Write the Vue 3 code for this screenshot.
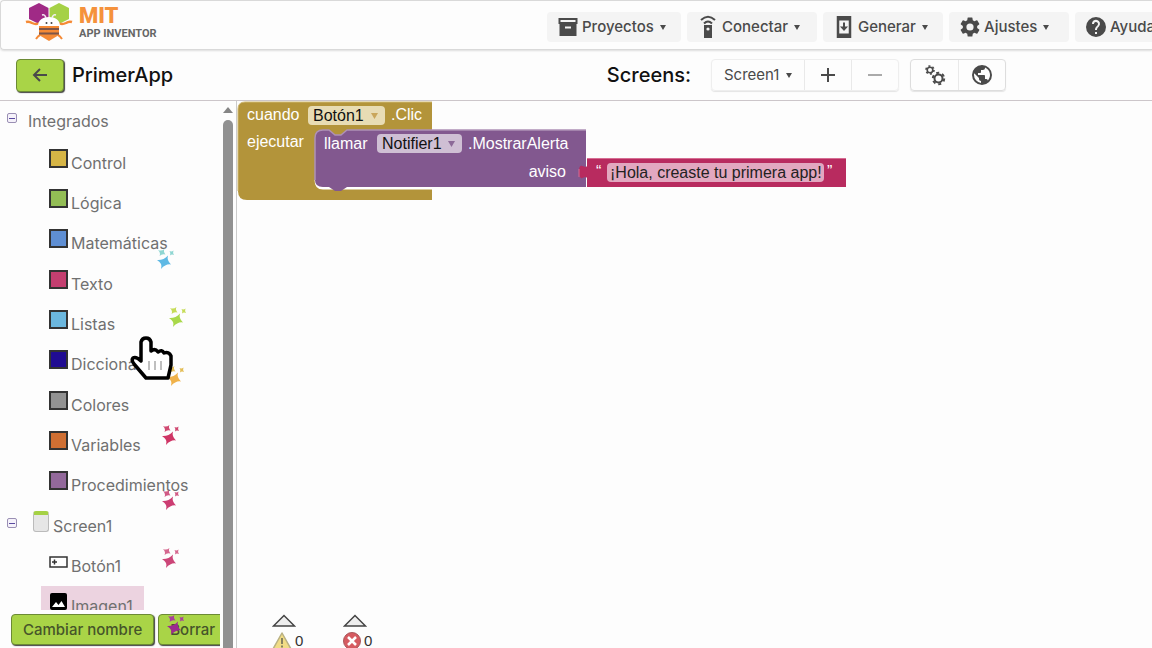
<script setup>
import { ref } from 'vue'

const menus = [
  { label: 'Proyectos', icon: 'archive' },
  { label: 'Conectar', icon: 'remote' },
  { label: 'Generar', icon: 'build' },
  { label: 'Ajustes', icon: 'gear' },
  { label: 'Ayuda', icon: 'help' }
]

const drawers = [
  { label: 'Control', tone: 'control' },
  { label: 'Lógica', tone: 'logic' },
  { label: 'Matemáticas', tone: 'math' },
  { label: 'Texto', tone: 'text' },
  { label: 'Listas', tone: 'lists' },
  { label: 'Diccionarios', tone: 'dicts' },
  { label: 'Colores', tone: 'colors' },
  { label: 'Variables', tone: 'vars' },
  { label: 'Procedimientos', tone: 'procs' }
]

const sparkles = [
  { x: 155, y: 247, color: '#5fb9e4', accent: '#8fd6d2' },
  { x: 167, y: 305, color: '#a9d94a', accent: '#c6dc58' },
  { x: 165, y: 364, color: '#f0b24a', accent: '#e3bd55' },
  { x: 160, y: 423, color: '#cf3565', accent: '#d04a72' },
  { x: 160, y: 488, color: '#cc3d72', accent: '#d15a85' },
  { x: 160, y: 546, color: '#cc4678', accent: '#d5688f' },
  { x: 165, y: 613, color: '#9c2a8f', accent: '#a8409c' }
]

const message = ref('¡Hola, creaste tu primera app!')
</script>

<template>
  <div class="app">
    <header class="topbar">
      <a class="brand" href="#" aria-label="MIT App Inventor">
        <svg width="48" height="40" viewBox="0 0 48 40" aria-hidden="true">
          <path d="M14 1 23.500 6V17L14 22 4 17V6z" fill="#a02a86" />
          <path d="M34 1 44 6V17L34 22 24.500 17V6z" fill="#a5d145" />
          <path d="M1 20q3-1 6 1 4 2 8 0M47 20q-3-1-6 1-4 2-8 0" fill="none" stroke="#f58a35" stroke-width="2.500" />
          <path d="M15 33q-2 1-4 4M33 33q2 1 4 4" fill="none" stroke="#f58a35" stroke-width="2" />
          <path d="M14 23h20v10l-10 6-10-6z" fill="#f58a35" />
          <path d="M14 27h20M14 31.500h20" stroke="#7d5548" stroke-width="2" />
          <path d="M13 24c0-6 5-9 11-9s11 3 11 9z" fill="#fff" />
          <path d="M21 16q-1-4-4-3M27 16q1-4 4-3" fill="none" stroke="#f3eef3" stroke-width="1.500" />
          <circle cx="21.500" cy="21" r="1" fill="#444" /><circle cx="26.500" cy="21" r="1" fill="#444" />
        </svg>
        <span class="brand-text"><b>MIT</b><span>APP INVENTOR</span></span>
      </a>
      <nav class="menus" aria-label="Principal">
        <button v-for="m in menus" :key="m.label" class="menu" type="button" aria-haspopup="menu">
          <svg v-if="m.icon === 'archive'" width="20" height="20" viewBox="0 0 20 20">
            <path d="M1.500 2h17v4h-17z" fill="none" stroke="currentColor" stroke-width="2" />
            <path d="M1.500 7h17v12h-17z" fill="currentColor" /><path d="M7 10.500h6" stroke="#f4f4f4" stroke-width="2" />
          </svg>
          <svg v-else-if="m.icon === 'remote'" width="20" height="24" viewBox="0 0 20 24">
            <path d="M3 5q7-6.500 14 0M6 8.500q4-4 8 0" fill="none" stroke="currentColor" stroke-width="2" />
            <path d="M6 10h8v13H6z" fill="currentColor" /><circle cx="10" cy="14" r="1.600" fill="#f4f4f4" />
          </svg>
          <svg v-else-if="m.icon === 'build'" width="20" height="22" viewBox="0 0 20 22">
            <path d="M4 1h12v20H4z" fill="none" stroke="currentColor" stroke-width="2.500" />
            <path d="M4 3h12M4 19h12" stroke="currentColor" stroke-width="3" />
            <path d="M10 6.500v6" stroke="currentColor" stroke-width="2" /><path d="M6 10.500h8L10 15z" fill="currentColor" />
          </svg>
          <svg v-else-if="m.icon === 'gear'" width="20" height="20" viewBox="2 2 20 20">
            <path fill="currentColor" d="M19.140 12.940c.04-.3.060-.61.060-.94s-.02-.64-.07-.94l2.030-1.580a.5.500 0 0 0 .12-.61l-1.920-3.320a.5.500 0 0 0-.59-.22l-2.390.96a7 7 0 0 0-1.620-.94l-.36-2.540A.5.500 0 0 0 13.920 2.400h-3.840a.5.500 0 0 0-.47.410l-.36 2.540a7 7 0 0 0-1.620.94l-2.390-.96a.5.500 0 0 0-.59.220L2.740 8.870a.5.500 0 0 0 .12.610l2.030 1.580a6 6 0 0 0 0 1.880l-2.030 1.580a.5.500 0 0 0-.12.610l1.920 3.320c.12.220.37.290.59.220l2.390-.96c.5.380 1.030.7 1.620.94l.36 2.540c.05.240.24.410.48.410h3.840c.24 0 .44-.17.470-.41l.36-2.540a7 7 0 0 0 1.620-.94l2.390.96c.22.080.47 0 .59-.22l1.920-3.320a.5.500 0 0 0-.12-.61zM12 15.600a3.600 3.600 0 1 1 0-7.200 3.600 3.600 0 0 1 0 7.200z" />
          </svg>
          <svg v-else width="20" height="20" viewBox="2 2 20 20">
            <path fill="currentColor" d="M12 2a10 10 0 1 0 0 20 10 10 0 0 0 0-20zm1 17h-2v-2h2zm2.070-7.750-.9.920C13.450 12.900 13 13.500 13 15h-2v-.5c0-1.100.45-2.100 1.170-2.830l1.240-1.260A2 2 0 1 0 10 9H8a4 4 0 1 1 7.070 2.250z" />
          </svg>
          <span>{{ m.label }}</span>
          <svg class="caret" width="6" height="6" viewBox="0 0 6 6"><path d="M0 1h6L3 6z" fill="currentColor" /></svg>
        </button>
      </nav>
    </header>

    <div class="projectbar">
      <button class="back" type="button" aria-label="Volver">
        <svg width="16" height="14" viewBox="0 0 16 14"><path d="M15 7H2M8 1 2 7l6 6" fill="none" stroke="currentColor" stroke-width="2" /></svg>
      </button>
      <h1>PrimerApp</h1>
      <div class="screens">
        <label for="screen">Screens:</label>
        <div class="group">
          <span class="picker">
            <select id="screen"><option>Screen1</option></select>
            <svg width="6" height="6" viewBox="0 0 6 6"><path d="M0 1h6L3 6z" fill="currentColor" /></svg>
          </span>
          <button type="button" aria-label="Añadir pantalla">
            <svg width="14" height="14" viewBox="0 0 14 14"><path d="M7 0v14M0 7h14" stroke="currentColor" stroke-width="2" /></svg>
          </button>
          <button type="button" class="dim" aria-label="Eliminar pantalla">
            <svg width="14" height="14" viewBox="0 0 14 14"><path d="M0 7h14" stroke="currentColor" stroke-width="2" /></svg>
          </button>
        </div>
        <div class="group strong">
          <button type="button" aria-label="Propiedades del proyecto">
            <svg width="22" height="22" viewBox="0 0 22 22" fill="none" stroke="currentColor">
              <circle cx="6" cy="6" r="2.800" stroke-width="1.600" />
              <circle cx="6" cy="6" r="4" stroke-width="1.600" stroke-dasharray="2 2.190" />
              <circle cx="14.500" cy="14.500" r="4" stroke-width="2" />
              <circle cx="14.500" cy="14.500" r="5.700" stroke-width="2" stroke-dasharray="3 2.970" />
            </svg>
          </button>
          <button type="button" aria-label="Publicar en la galería">
            <svg width="20" height="20" viewBox="2 2 20 20"><path fill="currentColor" d="M12 2a10 10 0 1 0 0 20 10 10 0 0 0 0-20zm-1 17.930A8 8 0 0 1 4 12c0-.62.080-1.210.21-1.790L9 15v1c0 1.100.9 2 2 2zm6.900-2.540A2 2 0 0 0 16 16h-1v-3c0-.55-.45-1-1-1H8v-2h2c.55 0 1-.45 1-1V7h2c1.100 0 2-.9 2-2v-.41a8 8 0 0 1 2.900 12.800z" /></svg>
          </button>
        </div>
      </div>
    </div>

    <main class="editor">
      <aside class="sidebar">
        <div class="panel">
          <div class="tree">
            <div class="branch root">
              <button class="toggle" type="button" aria-label="Contraer Integrados"></button>
              <span>Integrados</span>
            </div>
            <ul>
              <li v-for="d in drawers" :key="d.label">
                <i class="swatch" :class="d.tone"></i><span>{{ d.label }}</span>
              </li>
            </ul>
            <div class="branch screen">
              <button class="toggle" type="button" aria-label="Contraer Screen1"></button>
              <i class="phone"></i>
              <span>Screen1</span>
            </div>
            <ul>
              <li>
                <svg width="19" height="19" viewBox="0 0 19 19"><path d="M1 5h17v10H1z" fill="#fff" stroke="#333" stroke-width="1.500" /><path d="M5.500 7.500v5M3 10h5" stroke="#333" stroke-width="1.500" /></svg>
                <span>Botón1</span>
              </li>
              <li class="selected">
                <svg width="19" height="19" viewBox="0 0 19 19"><rect x="1" y="1" width="17" height="17" rx="2" fill="#000" /><path d="m3 15 4-5 2.500 3 3-4L16 15z" fill="#fff" /></svg>
                <span>Imagen1</span>
              </li>
            </ul>
          </div>
          <div class="actions">
            <button type="button">Cambiar nombre</button>
            <button type="button">Borrar</button>
          </div>
        </div>
        <div class="scrollbar" aria-hidden="true">
          <svg width="10" height="6" viewBox="0 0 10 6"><path d="M0 6h10L5 0z" fill="#858585" /></svg>
          <i></i>
        </div>
      </aside>

      <section class="workspace" aria-label="Bloques">
        <div class="blocks">
          <svg width="612" height="102" viewBox="0 0 612 102" aria-hidden="true">
            <path d="M1 8Q1 1 8 1H195V90H195V99H10Q1 99 1 90z" fill="#b3943a" />
            <path d="M1 90V8Q1 1 8 1H195" fill="none" stroke="#cdb56f" />
            <path d="M79 79Q79 87 86 87H195" fill="none" stroke="#fff" stroke-width="3" />
            <path d="M78 37Q78 29 86 29H92L98 34H104L110 29H349V86H110L104 90H98L92 86H86Q78 86 78 79z" fill="#82588f" />
            <path d="M78 79V37Q78 29 86 29H92L98 34H104L110 29H349" fill="none" stroke="#ae91b7" stroke-width="1.500" />
            <path d="M350 57H609V86H350V77C348 73 342 83 342 71S348 69 350 65z" fill="#b82b5f" />
            <path d="M342 76V68M350 57.500H609" fill="none" stroke="#d66d93" />
          </svg>
          <span class="word when">cuando</span>
          <span class="field gold">
            <select aria-label="Componente del evento"><option>Botón1</option></select>
            <svg width="7" height="6" viewBox="0 0 7 6"><path d="M0 0h7L3.500 6z" fill="#c9a65b" /></svg>
          </span>
          <span class="word click">.Clic</span>
          <span class="word run">ejecutar</span>
          <span class="word call">llamar</span>
          <span class="field violet">
            <select aria-label="Componente del método"><option>Notifier1</option></select>
            <svg width="7" height="6" viewBox="0 0 7 6"><path d="M0 0h7L3.500 6z" fill="#8c6a98" /></svg>
          </span>
          <span class="word method">.MostrarAlerta</span>
          <span class="word notice">aviso</span>
          <span class="word open">“</span>
          <input v-model="message" class="literal" type="text" aria-label="Texto">
          <span class="word close">”</span>
        </div>
        <div class="issues">
          <div class="issue">
            <svg width="24" height="13" viewBox="0 0 24 13"><path d="M1.500 12 12 1.500 22.500 12z" fill="#eee" stroke="#444" stroke-width="1.500" /></svg>
            <span>
              <svg width="20" height="18" viewBox="0 0 20 18"><path d="M10 1 19 17H1z" fill="#f1dc85" stroke="#b9b183" stroke-width="1.500" stroke-linejoin="round" /><path d="M10 6v6M10 13.500v2" stroke="#868260" stroke-width="2" /></svg>
              0
            </span>
          </div>
          <div class="issue">
            <svg width="24" height="13" viewBox="0 0 24 13"><path d="M1.500 12 12 1.500 22.500 12z" fill="#eee" stroke="#444" stroke-width="1.500" /></svg>
            <span>
              <svg width="18" height="18" viewBox="1 0 18 18"><circle cx="10" cy="9" r="8.500" fill="#d65b61" stroke="#a9585c" /><path d="m6 5 8 8m0-8-8 8" stroke="#fff" stroke-width="2.500" /></svg>
              0
            </span>
          </div>
        </div>
      </section>
    </main>

    <svg
      v-for="s in sparkles" :key="s.y" class="sparkle" width="20" height="24" viewBox="0 0 20 24"
      aria-hidden="true" :style="{ left: s.x + 'px', top: s.y + 'px' }"
    >
      <path d="M13 8.500Q11.500 13 16 17.500 11 16.500 6 22 8 16.500 2 13 8.500 13.500 13 8.500z" :fill="s.color" />
      <path d="M9.500 2Q8 4.500 10.500 7.500 7 6.500 4.500 9 6 6 3 3 6.500 4.500 9.500 2zM18.500 3.500Q17.500 5.500 19 8 16.500 7 15 8.500 16 6 14.500 4 16.500 5 18.500 3.500z" :fill="s.accent" />
    </svg>

    <svg class="hand" width="44" height="46" viewBox="0 0 44 46" aria-hidden="true">
      <path d="M11 23V7Q12 3 16 3T21 7V16Q25 13 28 17 32 14 34 18 39 16 41 21V30L38 43H16L4 29Q1 25 3 23 6 21 11 26z" fill="#fff" stroke="#000" stroke-width="3.500" stroke-linejoin="round" />
      <path d="M19 26v9M25 26v9M31 26v9" stroke="#aaa" stroke-width="1.500" />
    </svg>
  </div>
</template>

<style>
body { margin: 0; overflow: hidden; }
</style>

<style scoped>
.app {
  position: relative;
  display: flex;
  flex-direction: column;
  height: 100vh;
  overflow: hidden;
  background: #fdfdfd;
  color: #4a4a4a;
  font: 16px/20px Inter, sans-serif;
}
button, select, input { font: inherit; color: inherit; border: 0; margin: 0; padding: 0; }
select { appearance: none; background: none; }
svg { flex: none; display: block; }
.topbar {
  display: flex;
  align-items: center;
  box-sizing: border-box;
  height: 50px;
  flex: none;
  padding-left: 24px;
  border: 1px solid #d9d9d9;
  border-radius: 4px 0 0 4px;
  border-right: 0;
  box-shadow: 0 1px 2px #ddd;
}
.brand { display: flex; gap: 6px; color: #666; text-decoration: none; margin-bottom: 6px; }
.brand-text { display: flex; flex-direction: column; font: 700 11px/12px Roboto, sans-serif; padding-top: 2px; }
.brand-text b { font: 900 22px/24px Roboto, sans-serif; color: #f5923c; }
.menus {
  display: grid;
  grid-template-columns: 134px 130px 120px 120px 130px;
  gap: 6px;
  margin: 4px -53px 0 auto;
}
.menu {
  display: flex;
  align-items: center;
  gap: 4px;
  height: 30px;
  padding-left: 11px;
  border-radius: 4px;
  background: #f4f4f4;
  font-size: 15px;
  font-weight: 500;
}
.menu .caret { margin-left: 2px; }
.projectbar {
  display: flex;
  align-items: center;
  box-sizing: border-box;
  height: 51px;
  flex: none;
  padding-left: 16px;
  border-bottom: 1px solid #ccc6ca;
}
.back {
  display: grid;
  place-items: center;
  width: 48px;
  height: 33px;
  border-radius: 4px;
  background: #a9d447;
  border: 1px solid #6c8a35;
  box-shadow: 1px 1px 1px #444;
}
h1 { margin: 0 0 0 8px; font: 500 20px/24px Inter, sans-serif; color: #111; }
.screens { display: flex; align-items: center; margin: 0 146px 0 auto; }
.screens label { font: 500 20px/24px Inter, sans-serif; color: #111; margin-right: 20px; }
.group { display: flex; border: 1px solid #eee; border-radius: 4px; box-shadow: 0 1px 1px #e4e4e4; }
.group > * { display: flex; align-items: center; justify-content: center; width: 47px; height: 30px; background: none; }
.group > * + * { border-left: 1px solid #e9e9e9; }
.group .picker { width: 92px; gap: 6px; }
.picker select { font-size: 15px; }
.strong { margin-left: 11px; border-color: #ddd; }
.dim { color: #aaa; }
.editor { display: flex; flex: 1; min-height: 0; }
.sidebar { display: flex; width: 236px; flex: none; border-right: 1px solid #ccc; }
.panel { display: flex; flex-direction: column; width: 220px; overflow: hidden; }
.tree { flex: 1; min-height: 0; overflow: hidden; color: #707070; }
.branch { display: flex; align-items: center; padding-left: 7px; height: 40px; }
.root { gap: 11px; margin-bottom: 2px; }
.screen { gap: 16px; }
.screen span { margin-left: -12px; }
.toggle {
  display: grid;
  place-items: center;
  width: 10px;
  height: 10px;
  border: 1px solid #9a8fb4;
  border-radius: 2px;
  background: #f5f2fa;
  margin-bottom: 6px;
}
.toggle::after { content: ""; width: 6px; height: 1px; background: #5a4aa0; }
.phone { width: 14px; height: 16px; border: 1px solid #bbb; border-top: 4px solid #a5d145; border-radius: 3px; background: #e6e6e6; margin-bottom: 10px; }
ul { list-style: none; margin: 0; padding: 0 0 0 41px; }
li { display: flex; align-items: center; gap: 3px; height: 40px; width: 150px; padding-left: 8px; }
li:nth-child(3n) { margin-bottom: 1px; }
li > svg { margin-bottom: 10px; }
.selected { width: 95px; background: #ecd3e0; }
.swatch { width: 15px; height: 15px; border: 2px solid #333; margin-bottom: 10px; }
.control { background: #d6b546; }
.logic { background: #93bd55; }
.math { background: #5f8fd3; }
.text { background: #c43f70; }
.lists { background: #6bb7de; }
.dicts { background: #200c92; }
.colors { background: #929292; }
.vars { background: #cf6f33; }
.procs { background: #93699b; }
.actions { display: flex; gap: 4px; padding: 4px 0 3px 11px; }
.actions button {
  flex: none;
  box-sizing: border-box;
  height: 31px;
  padding: 0 11px;
  border: 1px solid #6c8a35;
  border-radius: 4px;
  background: #a9d447;
  box-shadow: 1px 1px 1px #444;
  color: #46552a;
  font-size: 15px;
  font-weight: 500;
}
.scrollbar { display: flex; flex-direction: column; gap: 7px; align-items: center; width: 10px; margin-left: 3px; padding-top: 6px; }
.scrollbar i { flex: 1; width: 10px; border-radius: 5px 5px 0 0; background: #919191; }
.workspace { position: relative; flex: 1; min-width: 0; overflow: hidden; }
.blocks { position: relative; width: 612px; font: 16px/20px "Liberation Sans", Arial, sans-serif; }
.word, .field, .literal { position: absolute; }
.word { color: #fff; white-space: nowrap; }
.when { left: 10px; top: 4px; }
.click { left: 154px; top: 4px; }
.run { left: 10px; top: 31px; }
.call { left: 87px; top: 33px; }
.method { left: 231px; top: 33px; }
.notice { right: 283px; top: 61px; }
.open { left: 359px; top: 61px; }
.close { left: 590px; top: 61px; }
.field { display: flex; align-items: center; justify-content: space-between; box-sizing: border-box; height: 19px; padding: 0 7px 0 5px; border-radius: 4px; color: #111; }
.field select { line-height: 19px; }
.gold { left: 71px; top: 5px; width: 77px; background: #e8dcb4; }
.violet { left: 140px; top: 33px; width: 85px; background: #cfbfd4; }
.literal { left: 370px; top: 62px; width: 217px; height: 19px; box-sizing: border-box; padding: 0 3px; border-radius: 4px; background: #e2a8c0; color: #222; }
.issues { position: absolute; left: 35px; bottom: -3px; display: flex; gap: 39px; font: 15px/20px "Liberation Sans", Arial, sans-serif; color: #333; }
.issue { display: flex; flex-direction: column; gap: 4px; width: 32px; }
.issue span { display: flex; align-items: center; gap: 3px; }
.sparkle, .hand { position: absolute; pointer-events: none; }
.hand { left: 130px; top: 335px; }
</style>
